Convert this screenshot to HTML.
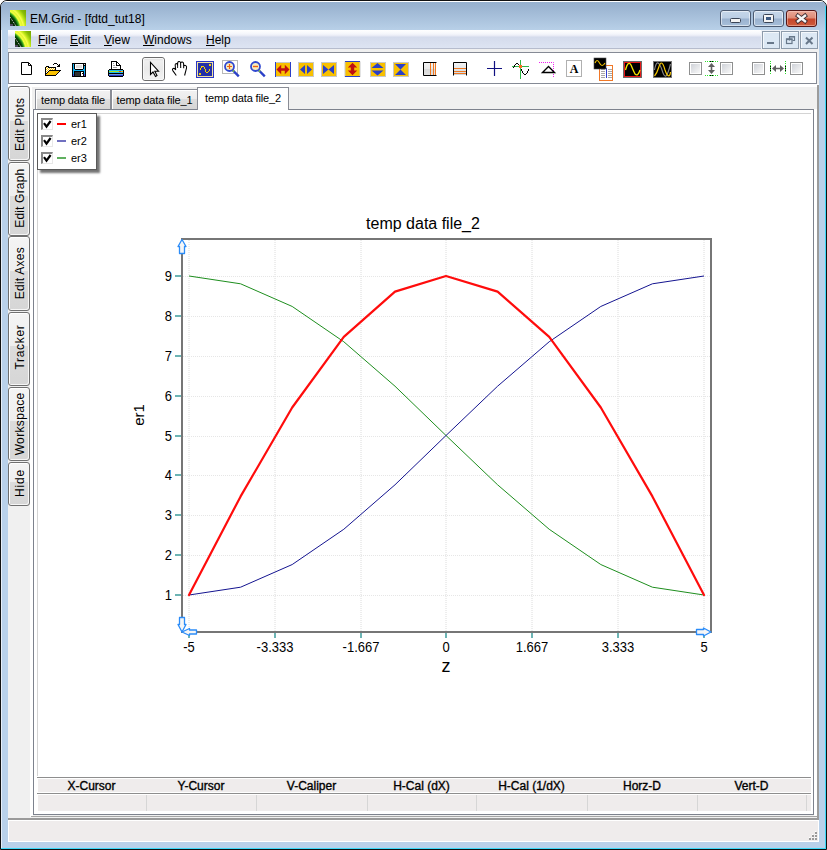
<!DOCTYPE html>
<html><head><meta charset="utf-8">
<style>
*{box-sizing:border-box;margin:0;padding:0}
html,body{width:827px;height:850px;overflow:hidden;background:#fff}
body{position:relative;font-family:"Liberation Sans",sans-serif;color:#000}
.a{position:absolute}
svg.a{overflow:visible}
#frame{left:0;top:0;width:827px;height:850px;background:#b9d1ea;border:1px solid #111;border-radius:7px 7px 0 0;box-shadow:inset 1px 1px 0 #e6eef8}
#tgrad{left:1px;top:1px;width:825px;height:29px;border-radius:6px 6px 0 0;background:linear-gradient(#fff 0,#fff 1px,#97b1cf 1px,#9ab3d0 5px,#b8d0e8 29px)}
#frameR{left:825px;top:6px;width:1px;height:843px;background:#3cd8f8}
#frameB{left:1px;top:848px;width:825px;height:1px;background:#3cd8f8}
#title{left:30px;top:11px;font-size:12px;line-height:16px;color:#000;white-space:nowrap}
.cap{top:10px;height:17px;border:1px solid #4d5c73;border-radius:3px;box-shadow:inset 0 0 0 1px rgba(255,255,255,.55);background:linear-gradient(#c6d7ea 0,#bccfe5 7px,#9ab2cf 8px,#a9c1dc 16px)}
#menubar{left:8px;top:30px;width:811px;height:18px;background:linear-gradient(#ffffff 0,#f4f6fb 4px,#e6e9f4 6px,#d4dbec 7px,#dde4f2 18px)}
#menuline{left:8px;top:48px;width:811px;height:1px;background:#b6bccd}
.menu{top:34px;font-size:12px;line-height:12px;white-space:nowrap}
.mdi{top:31px;height:18px;border:1px solid #8d9bab;background:#dce8f4;box-shadow:inset 1px 1px 0 #f4f8fc}
#gap{left:8px;top:49px;width:811px;height:35px;background:#f0f0f0}
#toolbar{left:8px;top:52px;width:809px;height:32px;background:#fff;border:1px solid #858a95}
#work{left:8px;top:84px;width:811px;height:736px;background:#f0f0f0}
.vtab{left:8px;width:22px;border:1px solid #707070;border-radius:3px;background:linear-gradient(#f4f4f4 0,#eeeeee 46%,#dcdcdc 46%,#d6d6d6 100%);box-shadow:inset 1px 1px 0 #fff,inset -1px -1px 0 #f6f6f6}
.vtab span{position:absolute;left:50%;top:50%;transform:translate(-50%,calc(-50% - 1px)) rotate(-90deg);font-size:12px;white-space:nowrap;line-height:12px}
.tab{top:89px;height:20px;border:1px solid #898c95;border-bottom:none;background:linear-gradient(#f2f2f2 0,#ebebeb 50%,#dddddd 50%,#d5d5d5 100%);box-shadow:inset 1px 1px 0 #fff;font-size:11px;line-height:20px;white-space:nowrap;text-align:center;letter-spacing:-0.15px}
#status{left:8px;top:820px;width:811px;height:22px;background:#efecec;border:1px solid #fff}
.hdr{top:780px;height:13px;font-size:12px;-webkit-text-stroke:0.35px #000;line-height:13px;text-align:center;white-space:nowrap}
</style></head><body>
<div id="frame" class="a"></div>
<div id="tgrad" class="a"></div>
<div id="frameR" class="a"></div>
<div id="frameB" class="a"></div>
<svg class="a" style="left:10px;top:10px" width="16" height="16" viewBox="0 0 16 16">
<defs><radialGradient id="ig10" cx="-12" cy="21" r="36" gradientUnits="userSpaceOnUse"><stop offset="0" stop-color="#203000"/><stop offset=".33" stop-color="#506a10"/><stop offset=".42" stop-color="#0c300a"/><stop offset=".52" stop-color="#002a00"/><stop offset=".56" stop-color="#0a5a0a"/><stop offset=".6" stop-color="#40b020"/><stop offset=".64" stop-color="#f4ff40"/><stop offset=".69" stop-color="#e0f830"/><stop offset=".72" stop-color="#faff50"/><stop offset=".78" stop-color="#c0e818"/><stop offset=".86" stop-color="#88bc08"/><stop offset="1" stop-color="#70a000"/></radialGradient></defs>
<rect width="16" height="16" fill="url(#ig10)"/>
<path d="M0 7L6 16" stroke="#f0f0f0" stroke-width="1" stroke-dasharray="1 1" fill="none"/>
<rect x="0" y="14" width="3" height="2" fill="#504860"/>
</svg>
<div id="title" class="a">EM.Grid - [fdtd_tut18]</div>
<div class="a cap" style="left:720px;width:31px"></div>
<div class="a cap" style="left:753px;width:31px"></div>
<div class="a cap" style="left:786px;width:31px;border-color:#541616;box-shadow:inset 0 0 0 1px rgba(255,220,210,.45);background:linear-gradient(#e9a797 0,#df8b76 7px,#c5452b 8px,#d0603f 16px)"></div>
<svg class="a" style="left:0;top:0" width="827" height="32">
<rect x="730.5" y="18.5" width="10" height="4" rx="1" fill="#f4f4f4" stroke="#3a4456"/>
<rect x="763.5" y="14.5" width="10" height="8" rx="1" fill="#f4f4f4" stroke="#3a4456"/>
<rect x="766" y="17" width="5" height="3" fill="#3d5a82"/>
<path d="M798 15.8L805 21.2M805 15.8L798 21.2" stroke="#3a2a30" stroke-width="4.2" fill="none" stroke-linecap="square"/>
<path d="M798 15.8L805 21.2M805 15.8L798 21.2" stroke="#f6f6f6" stroke-width="2.4" fill="none" stroke-linecap="square"/>
</svg>

<div id="menubar" class="a"></div>
<div id="menuline" class="a"></div>
<svg class="a" style="left:15px;top:31px" width="16" height="16" viewBox="0 0 16 16">
<defs><radialGradient id="ig15" cx="-12" cy="21" r="36" gradientUnits="userSpaceOnUse"><stop offset="0" stop-color="#203000"/><stop offset=".33" stop-color="#506a10"/><stop offset=".42" stop-color="#0c300a"/><stop offset=".52" stop-color="#002a00"/><stop offset=".56" stop-color="#0a5a0a"/><stop offset=".6" stop-color="#40b020"/><stop offset=".64" stop-color="#f4ff40"/><stop offset=".69" stop-color="#e0f830"/><stop offset=".72" stop-color="#faff50"/><stop offset=".78" stop-color="#c0e818"/><stop offset=".86" stop-color="#88bc08"/><stop offset="1" stop-color="#70a000"/></radialGradient></defs>
<rect width="16" height="16" fill="url(#ig15)"/>
<path d="M0 7L6 16" stroke="#f0f0f0" stroke-width="1" stroke-dasharray="1 1" fill="none"/>
<rect x="0" y="14" width="3" height="2" fill="#504860"/>
</svg>
<div class="a menu" style="left:38px"><u>F</u>ile</div>
<div class="a menu" style="left:70px"><u>E</u>dit</div>
<div class="a menu" style="left:104px"><u>V</u>iew</div>
<div class="a menu" style="left:143px"><u>W</u>indows</div>
<div class="a menu" style="left:206px"><u>H</u>elp</div>
<div class="a" style="left:761px;top:30px;width:58px;height:19px;background:#eef2f8"></div>
<div class="a mdi" style="left:762px;width:18px"></div>
<div class="a mdi" style="left:781px;width:18px"></div>
<div class="a mdi" style="left:800px;width:18px"></div>
<svg class="a" style="left:0;top:0" width="827" height="50">
<rect x="767" y="42" width="7" height="2" fill="#68788a"/>
<path d="M789.5 40.5V36.5H794.5V40.5H792.5" stroke="#68788a" stroke-width="1.2" fill="none"/><path d="M789 36.8H795" stroke="#68788a" stroke-width="1.6"/>
<rect x="786.5" y="39" width="5.5" height="4.5" fill="none" stroke="#68788a" stroke-width="1.2"/><path d="M786 39.3H792.5" stroke="#68788a" stroke-width="1.6"/>
<path d="M806 37.5L812.5 44M812.5 37.5L806 44" stroke="#68788a" stroke-width="2"/>
</svg>

<div id="gap" class="a"></div>
<div id="toolbar" class="a"></div>
<svg class="a" style="left:0;top:52px" width="827" height="32" viewBox="0 52 827 32">
<path d="M21.5 62.5H28.5L31.5 65.5V74.5H21.5Z" fill="#fff" stroke="#000"/><path d="M28.5 62.5V65.5H31.5" fill="none" stroke="#000"/>
<g shape-rendering="crispEdges"><rect x="54" y="63" width="1" height="1" fill="#000"/><rect x="55" y="63" width="1" height="1" fill="#000"/><rect x="56" y="63" width="1" height="1" fill="#000"/><rect x="53" y="64" width="1" height="1" fill="#000"/><rect x="57" y="64" width="1" height="1" fill="#000"/><rect x="59" y="64" width="1" height="1" fill="#000"/><rect x="58" y="65" width="1" height="1" fill="#000"/><rect x="59" y="65" width="1" height="1" fill="#000"/><rect x="46" y="66" width="1" height="1" fill="#000"/><rect x="47" y="66" width="1" height="1" fill="#000"/><rect x="48" y="66" width="1" height="1" fill="#000"/><rect x="57" y="66" width="1" height="1" fill="#000"/><rect x="58" y="66" width="1" height="1" fill="#000"/><rect x="59" y="66" width="1" height="1" fill="#000"/><rect x="45" y="67" width="1" height="1" fill="#000"/><rect x="46" y="67" width="1" height="1" fill="#f8c000"/><rect x="47" y="67" width="1" height="1" fill="#ffffff"/><rect x="48" y="67" width="1" height="1" fill="#000"/><rect x="49" y="67" width="1" height="1" fill="#000"/><rect x="50" y="67" width="1" height="1" fill="#000"/><rect x="51" y="67" width="1" height="1" fill="#000"/><rect x="52" y="67" width="1" height="1" fill="#000"/><rect x="53" y="67" width="1" height="1" fill="#000"/><rect x="54" y="67" width="1" height="1" fill="#000"/><rect x="55" y="67" width="1" height="1" fill="#000"/><rect x="45" y="68" width="1" height="1" fill="#000"/><rect x="46" y="68" width="1" height="1" fill="#ffffff"/><rect x="47" y="68" width="1" height="1" fill="#f8c000"/><rect x="48" y="68" width="1" height="1" fill="#ffffff"/><rect x="49" y="68" width="1" height="1" fill="#f8c000"/><rect x="50" y="68" width="1" height="1" fill="#ffffff"/><rect x="51" y="68" width="1" height="1" fill="#f8c000"/><rect x="52" y="68" width="1" height="1" fill="#ffffff"/><rect x="53" y="68" width="1" height="1" fill="#f8c000"/><rect x="54" y="68" width="1" height="1" fill="#ffffff"/><rect x="55" y="68" width="1" height="1" fill="#000"/><rect x="45" y="69" width="1" height="1" fill="#000"/><rect x="46" y="69" width="1" height="1" fill="#f8c000"/><rect x="47" y="69" width="1" height="1" fill="#ffffff"/><rect x="48" y="69" width="1" height="1" fill="#f8c000"/><rect x="49" y="69" width="1" height="1" fill="#ffffff"/><rect x="50" y="69" width="1" height="1" fill="#f8c000"/><rect x="51" y="69" width="1" height="1" fill="#ffffff"/><rect x="52" y="69" width="1" height="1" fill="#f8c000"/><rect x="53" y="69" width="1" height="1" fill="#ffffff"/><rect x="54" y="69" width="1" height="1" fill="#f8c000"/><rect x="55" y="69" width="1" height="1" fill="#000"/><rect x="45" y="70" width="1" height="1" fill="#000"/><rect x="46" y="70" width="1" height="1" fill="#ffffff"/><rect x="47" y="70" width="1" height="1" fill="#f8c000"/><rect x="48" y="70" width="1" height="1" fill="#ffffff"/><rect x="49" y="70" width="1" height="1" fill="#000"/><rect x="50" y="70" width="1" height="1" fill="#000"/><rect x="51" y="70" width="1" height="1" fill="#000"/><rect x="52" y="70" width="1" height="1" fill="#000"/><rect x="53" y="70" width="1" height="1" fill="#000"/><rect x="54" y="70" width="1" height="1" fill="#000"/><rect x="55" y="70" width="1" height="1" fill="#000"/><rect x="56" y="70" width="1" height="1" fill="#000"/><rect x="57" y="70" width="1" height="1" fill="#000"/><rect x="58" y="70" width="1" height="1" fill="#000"/><rect x="59" y="70" width="1" height="1" fill="#000"/><rect x="60" y="70" width="1" height="1" fill="#000"/><rect x="45" y="71" width="1" height="1" fill="#000"/><rect x="46" y="71" width="1" height="1" fill="#f8c000"/><rect x="47" y="71" width="1" height="1" fill="#ffffff"/><rect x="48" y="71" width="1" height="1" fill="#000"/><rect x="49" y="71" width="1" height="1" fill="#f8c000"/><rect x="50" y="71" width="1" height="1" fill="#f8c000"/><rect x="51" y="71" width="1" height="1" fill="#f8c000"/><rect x="52" y="71" width="1" height="1" fill="#f8c000"/><rect x="53" y="71" width="1" height="1" fill="#f8c000"/><rect x="54" y="71" width="1" height="1" fill="#f8c000"/><rect x="55" y="71" width="1" height="1" fill="#f8c000"/><rect x="56" y="71" width="1" height="1" fill="#f8c000"/><rect x="57" y="71" width="1" height="1" fill="#f8c000"/><rect x="58" y="71" width="1" height="1" fill="#f8c000"/><rect x="59" y="71" width="1" height="1" fill="#000"/><rect x="45" y="72" width="1" height="1" fill="#000"/><rect x="46" y="72" width="1" height="1" fill="#ffffff"/><rect x="47" y="72" width="1" height="1" fill="#000"/><rect x="48" y="72" width="1" height="1" fill="#f8c000"/><rect x="49" y="72" width="1" height="1" fill="#f8c000"/><rect x="50" y="72" width="1" height="1" fill="#f8c000"/><rect x="51" y="72" width="1" height="1" fill="#f8c000"/><rect x="52" y="72" width="1" height="1" fill="#f8c000"/><rect x="53" y="72" width="1" height="1" fill="#f8c000"/><rect x="54" y="72" width="1" height="1" fill="#f8c000"/><rect x="55" y="72" width="1" height="1" fill="#f8c000"/><rect x="56" y="72" width="1" height="1" fill="#f8c000"/><rect x="57" y="72" width="1" height="1" fill="#f8c000"/><rect x="58" y="72" width="1" height="1" fill="#000"/><rect x="45" y="73" width="1" height="1" fill="#000"/><rect x="46" y="73" width="1" height="1" fill="#000"/><rect x="47" y="73" width="1" height="1" fill="#f8c000"/><rect x="48" y="73" width="1" height="1" fill="#f8c000"/><rect x="49" y="73" width="1" height="1" fill="#f8c000"/><rect x="50" y="73" width="1" height="1" fill="#f8c000"/><rect x="51" y="73" width="1" height="1" fill="#f8c000"/><rect x="52" y="73" width="1" height="1" fill="#f8c000"/><rect x="53" y="73" width="1" height="1" fill="#f8c000"/><rect x="54" y="73" width="1" height="1" fill="#f8c000"/><rect x="55" y="73" width="1" height="1" fill="#f8c000"/><rect x="56" y="73" width="1" height="1" fill="#f8c000"/><rect x="57" y="73" width="1" height="1" fill="#000"/><rect x="45" y="74" width="1" height="1" fill="#000"/><rect x="46" y="74" width="1" height="1" fill="#f8c000"/><rect x="47" y="74" width="1" height="1" fill="#f8c000"/><rect x="48" y="74" width="1" height="1" fill="#f8c000"/><rect x="49" y="74" width="1" height="1" fill="#f8c000"/><rect x="50" y="74" width="1" height="1" fill="#f8c000"/><rect x="51" y="74" width="1" height="1" fill="#f8c000"/><rect x="52" y="74" width="1" height="1" fill="#f8c000"/><rect x="53" y="74" width="1" height="1" fill="#f8c000"/><rect x="54" y="74" width="1" height="1" fill="#f8c000"/><rect x="55" y="74" width="1" height="1" fill="#f8c000"/><rect x="56" y="74" width="1" height="1" fill="#000"/><rect x="45" y="75" width="1" height="1" fill="#000"/><rect x="46" y="75" width="1" height="1" fill="#000"/><rect x="47" y="75" width="1" height="1" fill="#000"/><rect x="48" y="75" width="1" height="1" fill="#000"/><rect x="49" y="75" width="1" height="1" fill="#000"/><rect x="50" y="75" width="1" height="1" fill="#000"/><rect x="51" y="75" width="1" height="1" fill="#000"/><rect x="52" y="75" width="1" height="1" fill="#000"/><rect x="53" y="75" width="1" height="1" fill="#000"/><rect x="54" y="75" width="1" height="1" fill="#000"/><rect x="55" y="75" width="1" height="1" fill="#000"/></g>
<g shape-rendering="crispEdges"><rect x="72" y="63" width="1" height="1" fill="#000"/><rect x="73" y="63" width="1" height="1" fill="#000"/><rect x="74" y="63" width="1" height="1" fill="#000"/><rect x="75" y="63" width="1" height="1" fill="#000"/><rect x="76" y="63" width="1" height="1" fill="#000"/><rect x="77" y="63" width="1" height="1" fill="#000"/><rect x="78" y="63" width="1" height="1" fill="#000"/><rect x="79" y="63" width="1" height="1" fill="#000"/><rect x="80" y="63" width="1" height="1" fill="#000"/><rect x="81" y="63" width="1" height="1" fill="#000"/><rect x="82" y="63" width="1" height="1" fill="#000"/><rect x="83" y="63" width="1" height="1" fill="#000"/><rect x="84" y="63" width="1" height="1" fill="#000"/><rect x="85" y="63" width="1" height="1" fill="#000"/><rect x="72" y="64" width="1" height="1" fill="#000"/><rect x="73" y="64" width="1" height="1" fill="#10b0f0"/><rect x="74" y="64" width="1" height="1" fill="#000"/><rect x="75" y="64" width="1" height="1" fill="#fff"/><rect x="76" y="64" width="1" height="1" fill="#fff"/><rect x="77" y="64" width="1" height="1" fill="#fff"/><rect x="78" y="64" width="1" height="1" fill="#fff"/><rect x="79" y="64" width="1" height="1" fill="#fff"/><rect x="80" y="64" width="1" height="1" fill="#fff"/><rect x="81" y="64" width="1" height="1" fill="#fff"/><rect x="82" y="64" width="1" height="1" fill="#fff"/><rect x="83" y="64" width="1" height="1" fill="#000"/><rect x="84" y="64" width="1" height="1" fill="#dcdcdc"/><rect x="85" y="64" width="1" height="1" fill="#000"/><rect x="72" y="65" width="1" height="1" fill="#000"/><rect x="73" y="65" width="1" height="1" fill="#10b0f0"/><rect x="74" y="65" width="1" height="1" fill="#000"/><rect x="75" y="65" width="1" height="1" fill="#fff"/><rect x="76" y="65" width="1" height="1" fill="#dcdcdc"/><rect x="77" y="65" width="1" height="1" fill="#dcdcdc"/><rect x="78" y="65" width="1" height="1" fill="#dcdcdc"/><rect x="79" y="65" width="1" height="1" fill="#dcdcdc"/><rect x="80" y="65" width="1" height="1" fill="#dcdcdc"/><rect x="81" y="65" width="1" height="1" fill="#dcdcdc"/><rect x="82" y="65" width="1" height="1" fill="#fff"/><rect x="83" y="65" width="1" height="1" fill="#000"/><rect x="84" y="65" width="1" height="1" fill="#000"/><rect x="85" y="65" width="1" height="1" fill="#000"/><rect x="72" y="66" width="1" height="1" fill="#000"/><rect x="73" y="66" width="1" height="1" fill="#10b0f0"/><rect x="74" y="66" width="1" height="1" fill="#000"/><rect x="75" y="66" width="1" height="1" fill="#fff"/><rect x="76" y="66" width="1" height="1" fill="#dcdcdc"/><rect x="77" y="66" width="1" height="1" fill="#dcdcdc"/><rect x="78" y="66" width="1" height="1" fill="#dcdcdc"/><rect x="79" y="66" width="1" height="1" fill="#dcdcdc"/><rect x="80" y="66" width="1" height="1" fill="#dcdcdc"/><rect x="81" y="66" width="1" height="1" fill="#dcdcdc"/><rect x="82" y="66" width="1" height="1" fill="#fff"/><rect x="83" y="66" width="1" height="1" fill="#000"/><rect x="84" y="66" width="1" height="1" fill="#10b0f0"/><rect x="85" y="66" width="1" height="1" fill="#000"/><rect x="72" y="67" width="1" height="1" fill="#000"/><rect x="73" y="67" width="1" height="1" fill="#10b0f0"/><rect x="74" y="67" width="1" height="1" fill="#000"/><rect x="75" y="67" width="1" height="1" fill="#fff"/><rect x="76" y="67" width="1" height="1" fill="#dcdcdc"/><rect x="77" y="67" width="1" height="1" fill="#dcdcdc"/><rect x="78" y="67" width="1" height="1" fill="#dcdcdc"/><rect x="79" y="67" width="1" height="1" fill="#dcdcdc"/><rect x="80" y="67" width="1" height="1" fill="#dcdcdc"/><rect x="81" y="67" width="1" height="1" fill="#dcdcdc"/><rect x="82" y="67" width="1" height="1" fill="#fff"/><rect x="83" y="67" width="1" height="1" fill="#000"/><rect x="84" y="67" width="1" height="1" fill="#10b0f0"/><rect x="85" y="67" width="1" height="1" fill="#000"/><rect x="72" y="68" width="1" height="1" fill="#000"/><rect x="73" y="68" width="1" height="1" fill="#10b0f0"/><rect x="74" y="68" width="1" height="1" fill="#000"/><rect x="75" y="68" width="1" height="1" fill="#fff"/><rect x="76" y="68" width="1" height="1" fill="#fff"/><rect x="77" y="68" width="1" height="1" fill="#fff"/><rect x="78" y="68" width="1" height="1" fill="#fff"/><rect x="79" y="68" width="1" height="1" fill="#fff"/><rect x="80" y="68" width="1" height="1" fill="#fff"/><rect x="81" y="68" width="1" height="1" fill="#fff"/><rect x="82" y="68" width="1" height="1" fill="#fff"/><rect x="83" y="68" width="1" height="1" fill="#000"/><rect x="84" y="68" width="1" height="1" fill="#10b0f0"/><rect x="85" y="68" width="1" height="1" fill="#000"/><rect x="72" y="69" width="1" height="1" fill="#000"/><rect x="73" y="69" width="1" height="1" fill="#10b0f0"/><rect x="74" y="69" width="1" height="1" fill="#10b0f0"/><rect x="75" y="69" width="1" height="1" fill="#000"/><rect x="76" y="69" width="1" height="1" fill="#000"/><rect x="77" y="69" width="1" height="1" fill="#000"/><rect x="78" y="69" width="1" height="1" fill="#000"/><rect x="79" y="69" width="1" height="1" fill="#000"/><rect x="80" y="69" width="1" height="1" fill="#000"/><rect x="81" y="69" width="1" height="1" fill="#000"/><rect x="82" y="69" width="1" height="1" fill="#000"/><rect x="83" y="69" width="1" height="1" fill="#10b0f0"/><rect x="84" y="69" width="1" height="1" fill="#10b0f0"/><rect x="85" y="69" width="1" height="1" fill="#000"/><rect x="72" y="70" width="1" height="1" fill="#000"/><rect x="73" y="70" width="1" height="1" fill="#10b0f0"/><rect x="74" y="70" width="1" height="1" fill="#10b0f0"/><rect x="75" y="70" width="1" height="1" fill="#10b0f0"/><rect x="76" y="70" width="1" height="1" fill="#10b0f0"/><rect x="77" y="70" width="1" height="1" fill="#10b0f0"/><rect x="78" y="70" width="1" height="1" fill="#10b0f0"/><rect x="79" y="70" width="1" height="1" fill="#10b0f0"/><rect x="80" y="70" width="1" height="1" fill="#10b0f0"/><rect x="81" y="70" width="1" height="1" fill="#10b0f0"/><rect x="82" y="70" width="1" height="1" fill="#10b0f0"/><rect x="83" y="70" width="1" height="1" fill="#10b0f0"/><rect x="84" y="70" width="1" height="1" fill="#10b0f0"/><rect x="85" y="70" width="1" height="1" fill="#000"/><rect x="72" y="71" width="1" height="1" fill="#000"/><rect x="73" y="71" width="1" height="1" fill="#10b0f0"/><rect x="74" y="71" width="1" height="1" fill="#000"/><rect x="75" y="71" width="1" height="1" fill="#000"/><rect x="76" y="71" width="1" height="1" fill="#000"/><rect x="77" y="71" width="1" height="1" fill="#000"/><rect x="78" y="71" width="1" height="1" fill="#000"/><rect x="79" y="71" width="1" height="1" fill="#000"/><rect x="80" y="71" width="1" height="1" fill="#000"/><rect x="81" y="71" width="1" height="1" fill="#000"/><rect x="82" y="71" width="1" height="1" fill="#000"/><rect x="83" y="71" width="1" height="1" fill="#000"/><rect x="84" y="71" width="1" height="1" fill="#10b0f0"/><rect x="85" y="71" width="1" height="1" fill="#000"/><rect x="72" y="72" width="1" height="1" fill="#000"/><rect x="73" y="72" width="1" height="1" fill="#10b0f0"/><rect x="74" y="72" width="1" height="1" fill="#000"/><rect x="75" y="72" width="1" height="1" fill="#303030"/><rect x="76" y="72" width="1" height="1" fill="#303030"/><rect x="77" y="72" width="1" height="1" fill="#303030"/><rect x="78" y="72" width="1" height="1" fill="#303030"/><rect x="79" y="72" width="1" height="1" fill="#303030"/><rect x="80" y="72" width="1" height="1" fill="#000"/><rect x="81" y="72" width="1" height="1" fill="#fff"/><rect x="82" y="72" width="1" height="1" fill="#fff"/><rect x="83" y="72" width="1" height="1" fill="#000"/><rect x="84" y="72" width="1" height="1" fill="#10b0f0"/><rect x="85" y="72" width="1" height="1" fill="#000"/><rect x="72" y="73" width="1" height="1" fill="#000"/><rect x="73" y="73" width="1" height="1" fill="#10b0f0"/><rect x="74" y="73" width="1" height="1" fill="#000"/><rect x="75" y="73" width="1" height="1" fill="#303030"/><rect x="76" y="73" width="1" height="1" fill="#303030"/><rect x="77" y="73" width="1" height="1" fill="#303030"/><rect x="78" y="73" width="1" height="1" fill="#303030"/><rect x="79" y="73" width="1" height="1" fill="#303030"/><rect x="80" y="73" width="1" height="1" fill="#000"/><rect x="81" y="73" width="1" height="1" fill="#fff"/><rect x="82" y="73" width="1" height="1" fill="#000"/><rect x="83" y="73" width="1" height="1" fill="#000"/><rect x="84" y="73" width="1" height="1" fill="#10b0f0"/><rect x="85" y="73" width="1" height="1" fill="#000"/><rect x="72" y="74" width="1" height="1" fill="#000"/><rect x="73" y="74" width="1" height="1" fill="#4848e0"/><rect x="74" y="74" width="1" height="1" fill="#000"/><rect x="75" y="74" width="1" height="1" fill="#303030"/><rect x="76" y="74" width="1" height="1" fill="#303030"/><rect x="77" y="74" width="1" height="1" fill="#303030"/><rect x="78" y="74" width="1" height="1" fill="#303030"/><rect x="79" y="74" width="1" height="1" fill="#303030"/><rect x="80" y="74" width="1" height="1" fill="#000"/><rect x="81" y="74" width="1" height="1" fill="#fff"/><rect x="82" y="74" width="1" height="1" fill="#fff"/><rect x="83" y="74" width="1" height="1" fill="#000"/><rect x="84" y="74" width="1" height="1" fill="#4848e0"/><rect x="85" y="74" width="1" height="1" fill="#000"/><rect x="72" y="75" width="1" height="1" fill="#000"/><rect x="73" y="75" width="1" height="1" fill="#4848e0"/><rect x="74" y="75" width="1" height="1" fill="#000"/><rect x="75" y="75" width="1" height="1" fill="#303030"/><rect x="76" y="75" width="1" height="1" fill="#303030"/><rect x="77" y="75" width="1" height="1" fill="#303030"/><rect x="78" y="75" width="1" height="1" fill="#303030"/><rect x="79" y="75" width="1" height="1" fill="#303030"/><rect x="80" y="75" width="1" height="1" fill="#000"/><rect x="81" y="75" width="1" height="1" fill="#fff"/><rect x="82" y="75" width="1" height="1" fill="#fff"/><rect x="83" y="75" width="1" height="1" fill="#000"/><rect x="84" y="75" width="1" height="1" fill="#4848e0"/><rect x="85" y="75" width="1" height="1" fill="#000"/><rect x="72" y="76" width="1" height="1" fill="#000"/><rect x="73" y="76" width="1" height="1" fill="#000"/><rect x="74" y="76" width="1" height="1" fill="#000"/><rect x="75" y="76" width="1" height="1" fill="#000"/><rect x="76" y="76" width="1" height="1" fill="#000"/><rect x="77" y="76" width="1" height="1" fill="#000"/><rect x="78" y="76" width="1" height="1" fill="#000"/><rect x="79" y="76" width="1" height="1" fill="#000"/><rect x="80" y="76" width="1" height="1" fill="#000"/><rect x="81" y="76" width="1" height="1" fill="#000"/><rect x="82" y="76" width="1" height="1" fill="#000"/><rect x="83" y="76" width="1" height="1" fill="#000"/><rect x="84" y="76" width="1" height="1" fill="#000"/><rect x="85" y="76" width="1" height="1" fill="#000"/></g>
<g shape-rendering="crispEdges"><rect x="111" y="61" width="1" height="1" fill="#000"/><rect x="112" y="61" width="1" height="1" fill="#000"/><rect x="113" y="61" width="1" height="1" fill="#000"/><rect x="114" y="61" width="1" height="1" fill="#000"/><rect x="115" y="61" width="1" height="1" fill="#000"/><rect x="116" y="61" width="1" height="1" fill="#000"/><rect x="111" y="62" width="1" height="1" fill="#000"/><rect x="112" y="62" width="1" height="1" fill="#fff"/><rect x="113" y="62" width="1" height="1" fill="#fff"/><rect x="114" y="62" width="1" height="1" fill="#fff"/><rect x="115" y="62" width="1" height="1" fill="#fff"/><rect x="116" y="62" width="1" height="1" fill="#000"/><rect x="117" y="62" width="1" height="1" fill="#000"/><rect x="111" y="63" width="1" height="1" fill="#000"/><rect x="112" y="63" width="1" height="1" fill="#fff"/><rect x="113" y="63" width="1" height="1" fill="#a0a0a0"/><rect x="114" y="63" width="1" height="1" fill="#fff"/><rect x="115" y="63" width="1" height="1" fill="#fff"/><rect x="116" y="63" width="1" height="1" fill="#000"/><rect x="117" y="63" width="1" height="1" fill="#fff"/><rect x="118" y="63" width="1" height="1" fill="#000"/><rect x="111" y="64" width="1" height="1" fill="#000"/><rect x="112" y="64" width="1" height="1" fill="#fff"/><rect x="113" y="64" width="1" height="1" fill="#fff"/><rect x="114" y="64" width="1" height="1" fill="#fff"/><rect x="115" y="64" width="1" height="1" fill="#fff"/><rect x="116" y="64" width="1" height="1" fill="#000"/><rect x="117" y="64" width="1" height="1" fill="#fff"/><rect x="118" y="64" width="1" height="1" fill="#fff"/><rect x="119" y="64" width="1" height="1" fill="#000"/><rect x="111" y="65" width="1" height="1" fill="#000"/><rect x="112" y="65" width="1" height="1" fill="#fff"/><rect x="113" y="65" width="1" height="1" fill="#a0a0a0"/><rect x="114" y="65" width="1" height="1" fill="#a0a0a0"/><rect x="115" y="65" width="1" height="1" fill="#fff"/><rect x="116" y="65" width="1" height="1" fill="#000"/><rect x="117" y="65" width="1" height="1" fill="#000"/><rect x="118" y="65" width="1" height="1" fill="#000"/><rect x="119" y="65" width="1" height="1" fill="#000"/><rect x="120" y="65" width="1" height="1" fill="#000"/><rect x="111" y="66" width="1" height="1" fill="#000"/><rect x="112" y="66" width="1" height="1" fill="#fff"/><rect x="113" y="66" width="1" height="1" fill="#fff"/><rect x="114" y="66" width="1" height="1" fill="#fff"/><rect x="115" y="66" width="1" height="1" fill="#fff"/><rect x="116" y="66" width="1" height="1" fill="#fff"/><rect x="117" y="66" width="1" height="1" fill="#fff"/><rect x="118" y="66" width="1" height="1" fill="#fff"/><rect x="119" y="66" width="1" height="1" fill="#fff"/><rect x="120" y="66" width="1" height="1" fill="#000"/><rect x="111" y="67" width="1" height="1" fill="#000"/><rect x="112" y="67" width="1" height="1" fill="#fff"/><rect x="113" y="67" width="1" height="1" fill="#a0a0a0"/><rect x="114" y="67" width="1" height="1" fill="#a0a0a0"/><rect x="115" y="67" width="1" height="1" fill="#a0a0a0"/><rect x="116" y="67" width="1" height="1" fill="#a0a0a0"/><rect x="117" y="67" width="1" height="1" fill="#fff"/><rect x="118" y="67" width="1" height="1" fill="#fff"/><rect x="119" y="67" width="1" height="1" fill="#fff"/><rect x="120" y="67" width="1" height="1" fill="#000"/><rect x="111" y="68" width="1" height="1" fill="#000"/><rect x="112" y="68" width="1" height="1" fill="#fff"/><rect x="113" y="68" width="1" height="1" fill="#fff"/><rect x="114" y="68" width="1" height="1" fill="#fff"/><rect x="115" y="68" width="1" height="1" fill="#fff"/><rect x="116" y="68" width="1" height="1" fill="#fff"/><rect x="117" y="68" width="1" height="1" fill="#fff"/><rect x="118" y="68" width="1" height="1" fill="#fff"/><rect x="119" y="68" width="1" height="1" fill="#fff"/><rect x="120" y="68" width="1" height="1" fill="#000"/><rect x="109" y="69" width="1" height="1" fill="#000"/><rect x="110" y="69" width="1" height="1" fill="#000"/><rect x="111" y="69" width="1" height="1" fill="#000"/><rect x="112" y="69" width="1" height="1" fill="#000"/><rect x="113" y="69" width="1" height="1" fill="#000"/><rect x="114" y="69" width="1" height="1" fill="#000"/><rect x="115" y="69" width="1" height="1" fill="#000"/><rect x="116" y="69" width="1" height="1" fill="#000"/><rect x="117" y="69" width="1" height="1" fill="#000"/><rect x="118" y="69" width="1" height="1" fill="#000"/><rect x="119" y="69" width="1" height="1" fill="#000"/><rect x="120" y="69" width="1" height="1" fill="#000"/><rect x="121" y="69" width="1" height="1" fill="#000"/><rect x="122" y="69" width="1" height="1" fill="#000"/><rect x="108" y="70" width="1" height="1" fill="#000"/><rect x="109" y="70" width="1" height="1" fill="#18b8f0"/><rect x="110" y="70" width="1" height="1" fill="#18b8f0"/><rect x="111" y="70" width="1" height="1" fill="#18b8f0"/><rect x="112" y="70" width="1" height="1" fill="#18b8f0"/><rect x="113" y="70" width="1" height="1" fill="#18b8f0"/><rect x="114" y="70" width="1" height="1" fill="#18b8f0"/><rect x="115" y="70" width="1" height="1" fill="#18b8f0"/><rect x="116" y="70" width="1" height="1" fill="#18b8f0"/><rect x="117" y="70" width="1" height="1" fill="#18b8f0"/><rect x="118" y="70" width="1" height="1" fill="#18b8f0"/><rect x="119" y="70" width="1" height="1" fill="#18b8f0"/><rect x="120" y="70" width="1" height="1" fill="#18b8f0"/><rect x="121" y="70" width="1" height="1" fill="#18b8f0"/><rect x="122" y="70" width="1" height="1" fill="#18b8f0"/><rect x="123" y="70" width="1" height="1" fill="#000"/><rect x="108" y="71" width="1" height="1" fill="#000"/><rect x="109" y="71" width="1" height="1" fill="#a8e020"/><rect x="110" y="71" width="1" height="1" fill="#a8e020"/><rect x="111" y="71" width="1" height="1" fill="#a8e020"/><rect x="112" y="71" width="1" height="1" fill="#a8e020"/><rect x="113" y="71" width="1" height="1" fill="#a8e020"/><rect x="114" y="71" width="1" height="1" fill="#a8e020"/><rect x="115" y="71" width="1" height="1" fill="#a8e020"/><rect x="116" y="71" width="1" height="1" fill="#a8e020"/><rect x="117" y="71" width="1" height="1" fill="#a8e020"/><rect x="118" y="71" width="1" height="1" fill="#a8e020"/><rect x="119" y="71" width="1" height="1" fill="#e82020"/><rect x="120" y="71" width="1" height="1" fill="#e82020"/><rect x="121" y="71" width="1" height="1" fill="#f8c000"/><rect x="122" y="71" width="1" height="1" fill="#f8c000"/><rect x="123" y="71" width="1" height="1" fill="#000"/><rect x="108" y="72" width="1" height="1" fill="#000"/><rect x="109" y="72" width="1" height="1" fill="#18b8f0"/><rect x="110" y="72" width="1" height="1" fill="#18b8f0"/><rect x="111" y="72" width="1" height="1" fill="#18b8f0"/><rect x="112" y="72" width="1" height="1" fill="#18b8f0"/><rect x="113" y="72" width="1" height="1" fill="#18b8f0"/><rect x="114" y="72" width="1" height="1" fill="#18b8f0"/><rect x="115" y="72" width="1" height="1" fill="#18b8f0"/><rect x="116" y="72" width="1" height="1" fill="#18b8f0"/><rect x="117" y="72" width="1" height="1" fill="#18b8f0"/><rect x="118" y="72" width="1" height="1" fill="#18b8f0"/><rect x="119" y="72" width="1" height="1" fill="#18b8f0"/><rect x="120" y="72" width="1" height="1" fill="#18b8f0"/><rect x="121" y="72" width="1" height="1" fill="#18b8f0"/><rect x="122" y="72" width="1" height="1" fill="#18b8f0"/><rect x="123" y="72" width="1" height="1" fill="#000"/><rect x="108" y="73" width="1" height="1" fill="#000"/><rect x="109" y="73" width="1" height="1" fill="#000"/><rect x="110" y="73" width="1" height="1" fill="#000"/><rect x="111" y="73" width="1" height="1" fill="#000"/><rect x="112" y="73" width="1" height="1" fill="#000"/><rect x="113" y="73" width="1" height="1" fill="#000"/><rect x="114" y="73" width="1" height="1" fill="#000"/><rect x="115" y="73" width="1" height="1" fill="#000"/><rect x="116" y="73" width="1" height="1" fill="#000"/><rect x="117" y="73" width="1" height="1" fill="#000"/><rect x="118" y="73" width="1" height="1" fill="#000"/><rect x="119" y="73" width="1" height="1" fill="#000"/><rect x="120" y="73" width="1" height="1" fill="#000"/><rect x="121" y="73" width="1" height="1" fill="#000"/><rect x="122" y="73" width="1" height="1" fill="#000"/><rect x="123" y="73" width="1" height="1" fill="#000"/><rect x="108" y="74" width="1" height="1" fill="#000"/><rect x="109" y="74" width="1" height="1" fill="#6a98e0"/><rect x="110" y="74" width="1" height="1" fill="#6a98e0"/><rect x="111" y="74" width="1" height="1" fill="#6a98e0"/><rect x="112" y="74" width="1" height="1" fill="#6a98e0"/><rect x="113" y="74" width="1" height="1" fill="#6a98e0"/><rect x="114" y="74" width="1" height="1" fill="#6a98e0"/><rect x="115" y="74" width="1" height="1" fill="#6a98e0"/><rect x="116" y="74" width="1" height="1" fill="#6a98e0"/><rect x="117" y="74" width="1" height="1" fill="#6a98e0"/><rect x="118" y="74" width="1" height="1" fill="#6a98e0"/><rect x="119" y="74" width="1" height="1" fill="#6a98e0"/><rect x="120" y="74" width="1" height="1" fill="#6a98e0"/><rect x="121" y="74" width="1" height="1" fill="#6a98e0"/><rect x="122" y="74" width="1" height="1" fill="#6a98e0"/><rect x="123" y="74" width="1" height="1" fill="#000"/><rect x="108" y="75" width="1" height="1" fill="#000"/><rect x="109" y="75" width="1" height="1" fill="#2838c8"/><rect x="110" y="75" width="1" height="1" fill="#2838c8"/><rect x="111" y="75" width="1" height="1" fill="#2838c8"/><rect x="112" y="75" width="1" height="1" fill="#2838c8"/><rect x="113" y="75" width="1" height="1" fill="#2838c8"/><rect x="114" y="75" width="1" height="1" fill="#2838c8"/><rect x="115" y="75" width="1" height="1" fill="#2838c8"/><rect x="116" y="75" width="1" height="1" fill="#2838c8"/><rect x="117" y="75" width="1" height="1" fill="#2838c8"/><rect x="118" y="75" width="1" height="1" fill="#2838c8"/><rect x="119" y="75" width="1" height="1" fill="#2838c8"/><rect x="120" y="75" width="1" height="1" fill="#2838c8"/><rect x="121" y="75" width="1" height="1" fill="#2838c8"/><rect x="122" y="75" width="1" height="1" fill="#2838c8"/><rect x="123" y="75" width="1" height="1" fill="#000"/><rect x="109" y="76" width="1" height="1" fill="#000"/><rect x="110" y="76" width="1" height="1" fill="#000"/><rect x="111" y="76" width="1" height="1" fill="#000"/><rect x="112" y="76" width="1" height="1" fill="#000"/><rect x="113" y="76" width="1" height="1" fill="#000"/><rect x="114" y="76" width="1" height="1" fill="#000"/><rect x="115" y="76" width="1" height="1" fill="#000"/><rect x="116" y="76" width="1" height="1" fill="#000"/><rect x="117" y="76" width="1" height="1" fill="#000"/><rect x="118" y="76" width="1" height="1" fill="#000"/><rect x="119" y="76" width="1" height="1" fill="#000"/><rect x="120" y="76" width="1" height="1" fill="#000"/><rect x="121" y="76" width="1" height="1" fill="#000"/><rect x="122" y="76" width="1" height="1" fill="#000"/></g>
<defs><linearGradient id="pbg" x1="0" y1="0" x2="0" y2="1"><stop offset="0" stop-color="#d8d8d8"/><stop offset=".15" stop-color="#efefef"/><stop offset=".5" stop-color="#e9e9e9"/><stop offset=".9" stop-color="#f2f2f2"/><stop offset="1" stop-color="#e0e0e0"/></linearGradient></defs><rect x="142.5" y="57.5" width="22" height="23" rx="2.5" fill="url(#pbg)" stroke="#6d6d6d"/><rect x="143.5" y="58.5" width="20" height="21" rx="1.5" fill="none" stroke="#f8f8f8"/>
<path d="M150.5 62.5V74.5L153 72L155.5 76.5L157 75.5L154.8 71.2H158.5Z" fill="#fff" stroke="#000" stroke-width="1.1" stroke-linejoin="miter"/>
<path d="M176.3 75.5L172.8 70.6Q171.9 68.9 173.3 68.4Q174.5 68.1 175.6 69.6L175.2 65.2Q175.1 63.6 176.5 63.6Q177.6 63.6 177.6 65L177.7 62.6Q178.1 61.4 179.3 61.5Q180.5 61.7 180.6 63L180.7 68M180.6 63.2Q181 62 182.3 62.1Q183.6 62.4 183.6 63.7L183.7 68.3M183.7 65.8Q184.6 65 185.8 65.6Q187 66.4 186.5 68.2L184.6 75.5" fill="none" stroke="#000" stroke-width="1.05" stroke-linejoin="round"/>
<path d="M175.6 69.6V68.3M177.6 65V68" stroke="#000" stroke-width=".9"/>
<rect x="196" y="61" width="18" height="17" fill="#2a36c8"/><rect x="197" y="62" width="16" height="15" fill="#f0e2a0"/><rect x="198" y="63" width="14" height="13" fill="#2430a8"/>
<g shape-rendering="crispEdges" fill="#f8d000"><rect x="200" y="68" width="1" height="1"/><rect x="200" y="69" width="1" height="1"/><rect x="201" y="66" width="1" height="1"/><rect x="201" y="67" width="1" height="1"/><rect x="202" y="66" width="1" height="1"/><rect x="203" y="66" width="1" height="1"/><rect x="204" y="67" width="1" height="1"/><rect x="204" y="68" width="1" height="1"/><rect x="205" y="69" width="1" height="1"/><rect x="205" y="70" width="1" height="1"/><rect x="205" y="71" width="1" height="1"/><rect x="206" y="72" width="1" height="1"/><rect x="207" y="72" width="1" height="1"/><rect x="208" y="71" width="1" height="1"/><rect x="209" y="69" width="1" height="1"/><rect x="209" y="70" width="1" height="1"/><rect x="209" y="64" width="1" height="1"/><rect x="210" y="64" width="1" height="1"/><rect x="209" y="65" width="1" height="1"/><rect x="210" y="65" width="1" height="1"/><rect x="199" y="73" width="1" height="1"/><rect x="200" y="73" width="1" height="1"/><rect x="199" y="74" width="1" height="1"/><rect x="200" y="74" width="1" height="1"/></g>
<rect x="222.5" y="60.5" width="15" height="13" fill="none" stroke="#b8b8b8"/>
<path d="M232.5 70L238.8 76.3" stroke="#2a40c8" stroke-width="2.4"/><path d="M232.5 70L234.0 71.5" stroke="#80c040" stroke-width="2"/>
<circle cx="229.5" cy="66.5" r="4.5" fill="#f6ecc0" stroke="#3048d0" stroke-width="1.8"/>
<path d="M227.0 66.5H232.0M229.5 64V69" stroke="#f06010" stroke-width="1.2"/>
<path d="M258.5 70L264.8 76.3" stroke="#2a40c8" stroke-width="2.4"/><path d="M258.5 70L260.0 71.5" stroke="#80c040" stroke-width="2"/>
<circle cx="255.5" cy="66.5" r="4.5" fill="#f6ecc0" stroke="#3048d0" stroke-width="1.8"/>
<path d="M253.0 66.5H258.0" stroke="#f06010" stroke-width="1.4"/>
<rect x="275" y="62" width="16" height="15" fill="#f8c000"/><path d="M275.5 62V77M290.5 62V77" stroke="#2a40c8"/>
<path d="M275 62.5H291M275 76.5H291" stroke="#c8c8c8"/><path d="M275.5 62V77M290.5 62V77" stroke="#2a40c8"/>
<path d="M276.5 69.5L281.2 64.8V68.2H284.8V64.8L289.5 69.5L284.8 74.2V70.8H281.2V74.2Z" fill="#c01010"/>
<rect x="298.5" y="62.5" width="15" height="14" fill="#f8c000" stroke="#c8c8c8"/>
<path d="M300 69.5L305 65V74Z M312 69.5L307 65V74Z" fill="#2a40c8"/>
<rect x="321.5" y="62.5" width="15" height="14" fill="#f8c000" stroke="#c8c8c8"/>
<path d="M323 65V74L328.5 69.5Z M334 65V74L328.5 69.5Z" fill="#2a40c8"/>
<rect x="345" y="61" width="15" height="16" fill="#f8c000"/><path d="M345 61.5H360M345 76.5H360" stroke="#2a40c8"/>
<path d="M345 61.5V77M360 61.5V77" stroke="#c8c8c8"/><path d="M345 61.5H360M345 76.5H360" stroke="#2a40c8"/>
<path d="M352.5 62.8L357.2 67.5H354.2V70.5H357.2L352.5 75.2L347.8 70.5H350.8V67.5H347.8Z" fill="#c01010"/>
<rect x="370.5" y="62.5" width="15" height="14" fill="#f8c000" stroke="#c8c8c8"/>
<path d="M371.5 68L377.5 63L383.5 68Z M371.5 70.5L377.5 75.5L383.5 70.5Z" fill="#2a40c8"/>
<rect x="393.5" y="62.5" width="15" height="14" fill="#f8c000" stroke="#c8c8c8"/>
<path d="M395 64H406L400.5 69.5Z M395 75H406L400.5 69.5Z" fill="#2a40c8"/>
<defs><linearGradient id="gg" x1="0" y1="0" x2="0" y2="1"><stop offset="0" stop-color="#f2f2f2"/><stop offset=".5" stop-color="#e8e8e8"/><stop offset=".5" stop-color="#d8d8d8"/><stop offset="1" stop-color="#e0e0e0"/></linearGradient><linearGradient id="gb" x1="0" y1="0" x2="0" y2="1"><stop offset="0" stop-color="#f4f4f4"/><stop offset="1" stop-color="#cdd6de"/></linearGradient><linearGradient id="cbg" x1="0" y1="0" x2="1" y2="1"><stop offset="0" stop-color="#cfd2d8"/><stop offset="1" stop-color="#f8f8f8"/></linearGradient></defs>
<rect x="424" y="63" width="12" height="12" fill="url(#gg)"/><path d="M436.5 62.5H423.5V75.5H436.5" stroke="#000" fill="none"/>
<path d="M430.5 63V75M433.5 63V75M435.5 63V75" stroke="#f07820" stroke-width="1"/>
<rect x="454" y="63" width="12" height="12" fill="url(#gb)"/><path d="M453.5 75.5V62.5H466.5V75.5" stroke="#000" fill="none"/>
<path d="M454 68.5H466M454 71.5H466M454 73.5H466" stroke="#f07820" stroke-width="1"/>
<path d="M487 68.5H502M494.5 61V76" stroke="#101080" stroke-width="1.2"/>
<g shape-rendering="crispEdges"><rect x="520" y="60" width="1" height="19" fill="#30b848"/><rect x="512" y="66" width="17" height="1" fill="#30b848"/>
<rect x="513" y="67" width="1" height="1" fill="#000"/><rect x="514" y="65" width="1" height="1" fill="#000"/><rect x="514" y="66" width="1" height="1" fill="#000"/><rect x="515" y="64" width="1" height="1" fill="#000"/><rect x="516" y="63" width="1" height="1" fill="#000"/><rect x="517" y="63" width="1" height="1" fill="#000"/><rect x="518" y="64" width="1" height="1" fill="#000"/><rect x="521" y="69" width="1" height="1" fill="#000"/><rect x="521" y="70" width="1" height="1" fill="#000"/><rect x="522" y="71" width="1" height="1" fill="#000"/><rect x="522" y="72" width="1" height="1" fill="#000"/><rect x="523" y="73" width="1" height="1" fill="#000"/><rect x="524" y="74" width="1" height="1" fill="#000"/><rect x="525" y="74" width="1" height="1" fill="#000"/><rect x="526" y="73" width="1" height="1" fill="#000"/><rect x="527" y="71" width="1" height="1" fill="#000"/><rect x="527" y="72" width="1" height="1" fill="#000"/><rect x="528" y="69" width="1" height="1" fill="#000"/><rect x="528" y="70" width="1" height="1" fill="#000"/>
<rect x="519" y="65" width="3" height="3" fill="#f87020"/></g>
<path d="M539 62.5H553.5V77" stroke="#f020f0" stroke-dasharray="1 1" fill="none"/>
<path d="M542.5 72.5L548.5 66.5L554.5 72.5Z" stroke="#000" stroke-width="1.4" fill="none" stroke-linejoin="miter"/>
<rect x="566.5" y="60.5" width="15" height="16" fill="#fff" stroke="#b0b0b0"/>
<text x="574" y="73" text-anchor="middle" font-family="Liberation Serif" font-weight="bold" font-size="12">A</text>
<rect x="599.5" y="65.5" width="13" height="15" fill="#fff" stroke="#f07828"/>
<g shape-rendering="crispEdges"><rect x="601" y="69" width="4" height="1" fill="#a8a8a8"/><rect x="608" y="69" width="4" height="1" fill="#a8a8a8"/><rect x="601" y="71" width="4" height="1" fill="#a8a8a8"/><rect x="608" y="71" width="4" height="1" fill="#a8a8a8"/><rect x="601" y="73" width="4" height="1" fill="#a8a8a8"/><rect x="608" y="73" width="4" height="1" fill="#a8a8a8"/><rect x="601" y="75" width="4" height="1" fill="#a8a8a8"/><rect x="608" y="75" width="4" height="1" fill="#a8a8a8"/><rect x="601" y="77" width="4" height="1" fill="#a8a8a8"/><rect x="608" y="77" width="4" height="1" fill="#a8a8a8"/><rect x="606" y="68" width="1" height="10" fill="#3040d0"/></g>
<rect x="594" y="58" width="12" height="11" fill="#000" stroke="#505050" stroke-width=".6"/>
<path d="M595 63Q597 58 599.5 63T605 63" stroke="#f8c800" stroke-width="1.1" fill="none"/>
<rect x="623" y="61" width="19" height="17" fill="#6a6a6a"/><rect x="624" y="62" width="17" height="15" fill="#e81818"/><rect x="625" y="63" width="15" height="13" fill="#000"/>
<path d="M625.5 70Q628 60 631 65Q633 70 635 74Q638 77 640 70" stroke="#f8e800" stroke-width="1.3" fill="none"/>
<rect x="653" y="61" width="19" height="17" fill="#777"/><rect x="654" y="62" width="17" height="15" fill="#000"/>
<path d="M654.5 70Q656 62 658 63Q660 64 662 70Q664 77 666 76Q668 74 670.5 64" stroke="#8a8a8a" stroke-width="1.1" fill="none"/>
<path d="M654.5 76Q657 73 658.5 68Q660 63 661.5 63Q663 63 665 70Q667 76 669 76Q670.5 75 670.5 72" stroke="#f8c800" stroke-width="1.2" fill="none"/>
<rect x="689.5" y="62.5" width="12" height="12" fill="#fff" stroke="#8e8f8f"/><rect x="691" y="64" width="9" height="9" fill="url(#cbg)"/>
<rect x="720.5" y="62.5" width="12" height="12" fill="#fff" stroke="#8e8f8f"/><rect x="722" y="64" width="9" height="9" fill="url(#cbg)"/>
<rect x="752.5" y="62.5" width="12" height="12" fill="#fff" stroke="#8e8f8f"/><rect x="754" y="64" width="9" height="9" fill="url(#cbg)"/>
<rect x="790.5" y="62.5" width="12" height="12" fill="#fff" stroke="#8e8f8f"/><rect x="792" y="64" width="9" height="9" fill="url(#cbg)"/>
<path d="M705 61.5H718M705 75.5H718" stroke="#30e030" stroke-dasharray="1 1"/><path d="M710 61.5H713M710 75.5H713" stroke="#000" stroke-dasharray="1 1"/>
<path d="M711.5 63L715 67H712.3V70H715L711.5 74L708 70H710.7V67H708Z" fill="#606060"/>
<path d="M770.5 61V75M785.5 61V75" stroke="#30e030" stroke-dasharray="1 1"/><path d="M770.5 66V72M785.5 66V72" stroke="#000" stroke-dasharray="1 1"/>
<path d="M772 68.5L776 65V67.8H780V65L784 68.5L780 72V69.2H776V72Z" fill="#606060"/>
</svg>
<div id="work" class="a"></div>
<div class="a" style="left:8px;top:84px;width:811px;height:3px;background:#fff"></div>

<div class="a vtab" style="top:86px;height:75px"><span style="letter-spacing:0.27px;transform:translate(calc(-50% + 1px + 0.14px),calc(-50% - 1px + 1.3px)) rotate(-90deg)">Edit Plots</span></div>
<div class="a vtab" style="top:162px;height:74px"><span style="letter-spacing:0.17px;transform:translate(calc(-50% + 1px + 0.09px),calc(-50% - 1px + 0.2px)) rotate(-90deg)">Edit Graph</span></div>
<div class="a vtab" style="top:236px;height:75px"><span style="letter-spacing:0.25px;transform:translate(calc(-50% + 1px + 0.12px),calc(-50% - 1px + 0.1px)) rotate(-90deg)">Edit Axes</span></div>
<div class="a vtab" style="top:312px;height:74px"><span style="letter-spacing:0.67px;transform:translate(calc(-50% + 1px + 0.34px),calc(-50% - 1px + -1.0px)) rotate(-90deg)">Tracker</span></div>
<div class="a vtab" style="top:387px;height:74px"><span style="letter-spacing:0.34px;transform:translate(calc(-50% + 1px + 0.17px),calc(-50% - 1px + 0.9px)) rotate(-90deg)">Workspace</span></div>
<div class="a vtab" style="top:462px;height:44px"><span style="letter-spacing:0.83px;transform:translate(calc(-50% + 1px + 0.41px),calc(-50% - 1px + -0.1px)) rotate(-90deg)">Hide</span></div>

<!-- white strip right of vtabs -->
<div class="a" style="left:30px;top:84px;width:2px;height:733px;background:#fff"></div>
<div class="a" style="left:32px;top:109px;width:1px;height:708px;background:#fff"></div>
<div class="a" style="left:814px;top:109px;width:3px;height:707px;background:#fff"></div>
<!-- tab page -->
<div class="a" style="left:33px;top:109px;width:781px;height:706px;background:#fff;border:1px solid #7d828d"></div>
<!-- graph panel border -->
<div class="a" style="left:37px;top:113px;width:774px;height:663px;border:1px solid #d4d4d4;border-right:none;border-bottom:none"></div>
<!-- lower right 3d edges -->
<div class="a" style="left:31px;top:816px;width:786px;height:1px;background:#a6a6a6"></div>
<div class="a" style="left:817px;top:85px;width:2px;height:735px;background:#9c9c9c"></div>
<div class="a" style="left:8px;top:818px;width:811px;height:2px;background:#9a9a9a"></div>

<div class="a tab" style="left:35px;width:76px">temp data file</div>
<div class="a tab" style="left:111px;width:87px">temp data file_1</div>
<div class="a tab" style="left:197px;top:87px;height:23px;width:92px;background:#fff;line-height:20px">temp data file_2</div>

<!-- table -->
<div class="a" style="left:37px;top:777px;width:774px;height:1px;background:#8e8e8e"></div>
<div class="a" style="left:38px;top:779px;width:773px;height:13px;background:#efecec"></div>
<div class="a" style="left:37px;top:793px;width:774px;height:1px;background:#8e8e8e"></div>
<div class="a" style="left:38px;top:795px;width:773px;height:16px;background:#efecec"></div>
<div class="a hdr" style="left:37px;width:109px">X-Cursor</div>
<div class="a hdr" style="left:146px;width:110px">Y-Cursor</div>
<div class="a hdr" style="left:256px;width:111px">V-Caliper</div>
<div class="a hdr" style="left:367px;width:109px">H-Cal (dX)</div>
<div class="a hdr" style="left:476px;width:111px">H-Cal (1/dX)</div>
<div class="a hdr" style="left:587px;width:110px">Horz-D</div>
<div class="a hdr" style="left:697px;width:109px">Vert-D</div>
<div class="a" style="left:146px;top:795px;width:1px;height:16px;background:#d6d6d6"></div>
<div class="a" style="left:256px;top:795px;width:1px;height:16px;background:#d6d6d6"></div>
<div class="a" style="left:367px;top:795px;width:1px;height:16px;background:#d6d6d6"></div>
<div class="a" style="left:476px;top:795px;width:1px;height:16px;background:#d6d6d6"></div>
<div class="a" style="left:587px;top:795px;width:1px;height:16px;background:#d6d6d6"></div>
<div class="a" style="left:697px;top:795px;width:1px;height:16px;background:#d6d6d6"></div>
<div class="a" style="left:806px;top:795px;width:1px;height:16px;background:#d6d6d6"></div>

<div class="a" style="left:37px;top:113px;width:60px;height:57px;background:#fff;border:1px solid #5a5a5a;box-shadow:3px 3px 2px rgba(0,0,0,.55)"></div>
<div class="a" style="left:41px;top:118px;width:12px;height:12px;background:#fff;border-top:2px solid #888;border-left:2px solid #888;border-right:1px solid #e8e8e8;border-bottom:1px solid #e8e8e8"></div>
<svg class="a" style="left:41px;top:118px" width="12" height="12"><path d="M3 5.2L5.5 8.6L9.6 3" stroke="#000" stroke-width="2.2" fill="none"/></svg>
<div class="a" style="left:57px;top:123px;width:9px;height:2px;background:#ff0000"></div>
<div class="a" style="left:71px;top:118px;font-size:11px;line-height:12px">er1</div>
<div class="a" style="left:41px;top:135px;width:12px;height:12px;background:#fff;border-top:2px solid #888;border-left:2px solid #888;border-right:1px solid #e8e8e8;border-bottom:1px solid #e8e8e8"></div>
<svg class="a" style="left:41px;top:135px" width="12" height="12"><path d="M3 5.2L5.5 8.6L9.6 3" stroke="#000" stroke-width="2.2" fill="none"/></svg>
<div class="a" style="left:57px;top:140px;width:9px;height:2px;background:#7070c0"></div>
<div class="a" style="left:71px;top:135px;font-size:11px;line-height:12px">er2</div>
<div class="a" style="left:41px;top:152px;width:12px;height:12px;background:#fff;border-top:2px solid #888;border-left:2px solid #888;border-right:1px solid #e8e8e8;border-bottom:1px solid #e8e8e8"></div>
<svg class="a" style="left:41px;top:152px" width="12" height="12"><path d="M3 5.2L5.5 8.6L9.6 3" stroke="#000" stroke-width="2.2" fill="none"/></svg>
<div class="a" style="left:57px;top:157px;width:9px;height:2px;background:#60b060"></div>
<div class="a" style="left:71px;top:152px;font-size:11px;line-height:12px">er3</div>
<svg class="a" style="left:0;top:0" width="827" height="850" viewBox="0 0 827 850">
<path d="M189 240V631 M275 240V631 M361 240V631 M446 240V631 M532 240V631 M618 240V631 M704 240V631" stroke="#dcdcdc" stroke-width="1" stroke-dasharray="1 1" fill="none"/>
<path d="M183 595.5H710 M183 555.5H710 M183 515.5H710 M183 475.5H710 M183 436.5H710 M183 396.5H710 M183 356.5H710 M183 316.5H710 M183 276.5H710" stroke="#e6e6e6" stroke-width="1" stroke-dasharray="1 1" fill="none"/>
<path d="M175 595H181 M175 555H181 M175 515H181 M175 475H181 M175 436H181 M175 396H181 M175 356H181 M175 316H181 M175 276H181 M189 633V638 M275 633V638 M361 633V638 M446 633V638 M532 633V638 M618 633V638 M704 633V638" stroke="#6cb4b4" stroke-width="2" fill="none"/>
<path d="M182 632V238M181 239H712M711 238V633M181 632H712" stroke="#767676" stroke-width="2" fill="none"/>
<polyline points="189.00,276.00 240.60,283.81 292.20,306.46 343.80,341.75 395.00,386.21 446.00,435.50 497.60,484.79 549.20,529.25 600.80,564.54 652.40,587.19 704.00,595.00" stroke="#1e8e1e" stroke-width="1.0" fill="none"/>
<polyline points="189.00,595.00 240.60,587.19 292.20,564.54 343.80,529.25 395.00,484.79 446.00,435.50 497.60,386.21 549.20,341.75 600.80,306.46 652.40,283.81 704.00,276.00" stroke="#141490" stroke-width="1.0" fill="none"/>
<polyline points="189.00,595.00 240.60,496.42 292.20,407.50 343.80,336.92 395.00,291.61 446.00,276.00 497.60,291.61 549.20,336.92 600.80,407.50 652.40,496.42 704.00,595.00" stroke="#ff0c0c" stroke-width="2.2" fill="none" stroke-linejoin="round" stroke-linecap="round"/>
<g font-family="Liberation Sans" font-size="13" fill="#000"><text transform="translate(172 600) scale(1 1.1)" text-anchor="end">1</text><text transform="translate(172 560) scale(1 1.1)" text-anchor="end">2</text><text transform="translate(172 520) scale(1 1.1)" text-anchor="end">3</text><text transform="translate(172 480) scale(1 1.1)" text-anchor="end">4</text><text transform="translate(172 441) scale(1 1.1)" text-anchor="end">5</text><text transform="translate(172 401) scale(1 1.1)" text-anchor="end">6</text><text transform="translate(172 361) scale(1 1.1)" text-anchor="end">7</text><text transform="translate(172 321) scale(1 1.1)" text-anchor="end">8</text><text transform="translate(172 281) scale(1 1.1)" text-anchor="end">9</text><text transform="translate(189 652) scale(1 1.1)" text-anchor="middle">-5</text><text transform="translate(275 652) scale(1 1.1)" text-anchor="middle">-3.333</text><text transform="translate(361 652) scale(1 1.1)" text-anchor="middle">-1.667</text><text transform="translate(446 652) scale(1 1.1)" text-anchor="middle">0</text><text transform="translate(532 652) scale(1 1.1)" text-anchor="middle">1.667</text><text transform="translate(618 652) scale(1 1.1)" text-anchor="middle">3.333</text><text transform="translate(704 652) scale(1 1.1)" text-anchor="middle">5</text></g>
<text x="423" y="229" text-anchor="middle" font-family="Liberation Sans" font-size="16">temp data file_2</text>
<text x="446" y="672" text-anchor="middle" font-family="Liberation Sans" font-size="18">z</text>
<text transform="translate(144 415) rotate(-90)" text-anchor="middle" font-family="Liberation Sans" font-size="15">er1</text>
<path d="M182 239.5L186 246.5H184.5V253.5H179.5V246.5H178Z" fill="#f6f6f6" stroke="#2b8cf8" stroke-width="1.3" stroke-linejoin="round"/>
<path d="M182 632L186 624.5H184.5V617.5H179.5V624.5H178Z" fill="#f6f6f6" stroke="#2b8cf8" stroke-width="1.3" stroke-linejoin="round"/>
<path d="M182 632L189.5 628.5V630H196.5V634H189.5V635.5Z" fill="#f6f6f6" stroke="#2b8cf8" stroke-width="1.3" stroke-linejoin="round"/>
<path d="M711 632L703.5 628V629.5H696.5V634.5H703.5V636Z" fill="#f6f6f6" stroke="#2b8cf8" stroke-width="1.3" stroke-linejoin="round"/>
</svg>
<div id="status" class="a"></div>
<svg class="a" style="left:0;top:0" width="827" height="850" shape-rendering="crispEdges"><rect x="815" y="831" width="1" height="1" fill="#fff"/><rect x="815" y="832" width="2" height="2" fill="#9a9a9a"/><rect x="812" y="834" width="1" height="1" fill="#fff"/><rect x="812" y="835" width="2" height="2" fill="#9a9a9a"/><rect x="815" y="834" width="1" height="1" fill="#fff"/><rect x="815" y="835" width="2" height="2" fill="#9a9a9a"/><rect x="809" y="837" width="1" height="1" fill="#fff"/><rect x="809" y="838" width="2" height="2" fill="#9a9a9a"/><rect x="812" y="837" width="1" height="1" fill="#fff"/><rect x="812" y="838" width="2" height="2" fill="#9a9a9a"/><rect x="815" y="837" width="1" height="1" fill="#fff"/><rect x="815" y="838" width="2" height="2" fill="#9a9a9a"/></svg>
</body></html>
